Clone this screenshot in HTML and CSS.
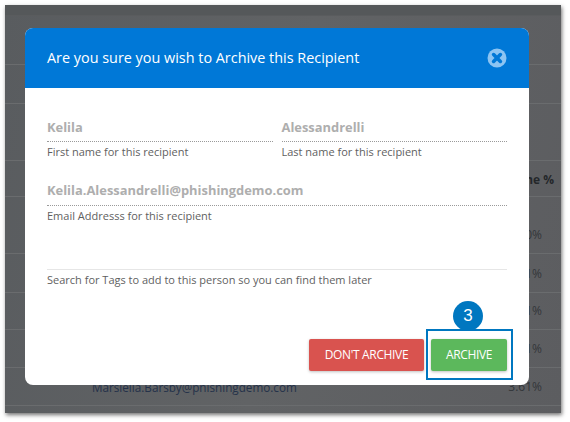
FILE: index.html
```html
<!DOCTYPE html>
<html lang="en">
<head>
<meta charset="utf-8">
<title>Archive recipient</title>
<link rel="stylesheet" href="styles.css">
</head>
<body>
<div class="window">
  <div class="table">
    <div class="row r1"></div>
    <div class="row r2"></div>
    <div class="row r3"></div>
    <div class="row r4"></div>
    <div class="row r5"><span class="pct head">Time %</span></div>
    <div class="row r6"><span class="pct">4.50%</span></div>
    <div class="row r7"><span class="pct">3.61%</span></div>
    <div class="row r8"><span class="pct">3.61%</span></div>
    <div class="row r9"><span class="pct">3.61%</span></div>
    <div class="row r10"><span class="mail">Marsiella.Barsby@phishingdemo.com</span><span class="pct">3.61%</span></div>
  </div>
  <div class="modal">
    <div class="modal-head">
      <h1>Are you sure you wish to Archive this Recipient</h1>
      <svg class="close" viewBox="0 0 20 20" width="20" height="20" aria-hidden="true">
        <circle cx="10" cy="10" r="9.5" fill="#8cc4f2"/>
        <path d="M6.6 6.6 13.4 13.4M13.4 6.6 6.6 13.4" stroke="#0078d7" stroke-width="3.6" stroke-linecap="round"/>
      </svg>
    </div>
    <div class="modal-body">
      <div class="pair">
        <div class="field">
          <div class="value">Kelila</div>
          <div class="hint">First name for this recipient</div>
        </div>
        <div class="field">
          <div class="value">Alessandrelli</div>
          <div class="hint">Last name for this recipient</div>
        </div>
      </div>
      <div class="field email">
        <div class="value">Kelila.Alessandrelli@phishingdemo.com</div>
        <div class="hint">Email Addresss for this recipient</div>
      </div>
      <div class="tags">Search for Tags to add to this person so you can find them later</div>
      <div class="actions">
        <button class="btn red" type="button">DON'T ARCHIVE</button>
        <button class="btn green" type="button">ARCHIVE</button>
      </div>
    </div>
  </div>
  <div class="callout"></div>
  <div class="badge">3</div>
</div>
</body>
</html>
```
FILE: styles.css
```css
* { box-sizing: border-box; }
html, body { margin: 0; padding: 0; background: #fff; }
body { width: 570px; height: 422px; overflow: hidden; font-family: "Open Sans", "Noto Sans", sans-serif; }
.window {
  position: relative;
  margin: 5px 0 0 5px;
  width: 556px;
  height: 408px;
  background: linear-gradient(100deg, #595c5f 0%, #616365 50%, #5c5d60 100%);
  box-shadow: 1px 2px 4px rgba(0,0,0,.55);
  overflow: hidden;
}
.table { display: flex; flex-direction: column; }
.row { position: relative; border-bottom: 1px solid #6a6c6e; flex: none; }
.r1 { height: 11px; background: #55585a; border-bottom-color: #5a5c5e; }
.r2 { height: 49px; }
.r3 { height: 39px; }
.r4 { height: 57px; }
.r5 { height: 36px; }
.r6 { height: 57px; }
.r7 { height: 39px; }
.r8 { height: 37px; }
.r9 { height: 38px; }
.r10 { height: 38px; }
.pct { position: absolute; right: 19px; bottom: 10px; font-size: 12px; line-height: 16px; color: #33363a; }
.pct.head { right: 7px; bottom: 8px; font-weight: 700; color: #24272a; }
.mail { position: absolute; left: 87px; bottom: 10px; font-size: 11.7px; line-height: 16px; color: #25324a; }
.modal {
  position: absolute;
  left: 20px;
  top: 23px;
  width: 504px;
  height: 357px;
  background: #fff;
  border-radius: 8px;
  overflow: hidden;
  display: flex;
  flex-direction: column;
}
.modal-head {
  flex: none;
  height: 60px;
  background: #0078d7;
  display: flex;
  align-items: center;
  justify-content: space-between;
  padding: 0 22px 0 22px;
}
.modal-head h1 { margin: 0; font-size: 14.4px; font-weight: 400; line-height: 20px; color: #fff; }
.close { display: block; }
.modal-body { flex: 1; display: flex; flex-direction: column; padding: 28px 22px 14px 22px; }
.pair { display: flex; gap: 9px; }
.pair .field { flex: 1; }
.value {
  height: 26px;
  font-size: 12.9px;
  font-weight: 700;
  line-height: 22px;
  color: #aeaeae;
  border-bottom: 1px dotted #9a9a9a;
}
.email .value { line-height: 20px; }
.hint { margin-top: 2px; font-size: 11px; line-height: 16px; color: #5f5f5f; }
.email { margin-top: 20px; }
.tags {
  margin-top: 45px;
  padding-top: 2px;
  border-top: 1px solid #e6e6e6;
  font-size: 11px;
  line-height: 16px;
  color: #5f5f5f;
}
.actions { margin-top: auto; display: flex; justify-content: flex-end; gap: 7px; }
.btn {
  height: 32px;
  border: 0;
  border-radius: 2px;
  padding: 0;
  font: 500 12px/32px "Open Sans", "Noto Sans", sans-serif;
  letter-spacing: -.35px;
  color: #fff;
  box-shadow: 0 1px 3px rgba(0,0,0,.25);
}
.red { width: 115px; background: #d9534f; }
.green { width: 76px; background: #5cb85c; }
.callout {
  position: absolute;
  left: 421px;
  top: 324px;
  width: 87px;
  height: 51px;
  border: 2px solid #0077c0;
}
.badge {
  position: absolute;
  left: 448px;
  top: 296px;
  width: 30px;
  height: 30px;
  border-radius: 50%;
  background: #0077c0;
  color: #fff;
  font: 400 17px/29px "Liberation Sans", sans-serif;
  text-align: center;
}
```
